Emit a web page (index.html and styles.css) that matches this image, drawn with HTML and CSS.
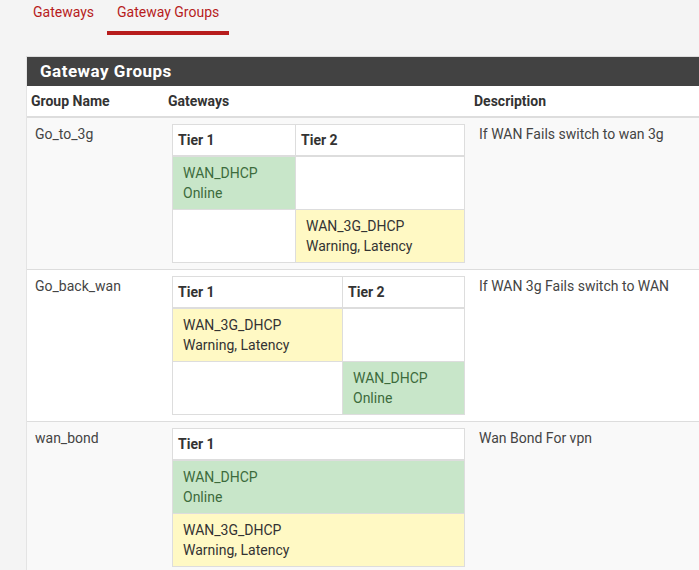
FILE: index.html
```html
<!DOCTYPE html>
<html>
<head>
<meta charset="utf-8">
<link rel="stylesheet" href="styles.css">
</head>
<body>
<nav class="tabs">
  <a class="tab" href="#">Gateways</a>
  <a class="tab active" href="#">Gateway Groups</a>
</nav>
<section class="panel">
  <h2 class="panel-title">Gateway Groups</h2>
  <table class="groups">
    <thead>
      <tr>
        <th class="c-name">Group Name</th>
        <th class="c-gw">Gateways</th>
        <th class="c-desc">Description</th>
      </tr>
    </thead>
    <tbody>
      <tr class="odd">
        <td>Go_to_3g</td>
        <td class="gw-cell">
          <table class="tiers">
            <thead><tr><th class="t-narrow">Tier 1</th><th>Tier 2</th></tr></thead>
            <tbody>
              <tr><td class="ok">WAN_DHCP<br>Online</td><td></td></tr>
              <tr><td></td><td class="warn">WAN_3G_DHCP<br>Warning, Latency</td></tr>
            </tbody>
          </table>
        </td>
        <td class="desc">If WAN Fails switch to wan 3g</td>
      </tr>
      <tr>
        <td>Go_back_wan</td>
        <td class="gw-cell">
          <table class="tiers">
            <thead><tr><th class="t-wide">Tier 1</th><th>Tier 2</th></tr></thead>
            <tbody>
              <tr><td class="warn">WAN_3G_DHCP<br>Warning, Latency</td><td></td></tr>
              <tr><td></td><td class="ok">WAN_DHCP<br>Online</td></tr>
            </tbody>
          </table>
        </td>
        <td class="desc">If WAN 3g Fails switch to WAN</td>
      </tr>
      <tr class="odd">
        <td>wan_bond</td>
        <td class="gw-cell">
          <table class="tiers">
            <thead><tr><th>Tier 1</th></tr></thead>
            <tbody>
              <tr><td class="ok">WAN_DHCP<br>Online</td></tr>
              <tr><td class="warn">WAN_3G_DHCP<br>Warning, Latency</td></tr>
            </tbody>
          </table>
        </td>
        <td class="desc">Wan Bond For vpn</td>
      </tr>
    </tbody>
  </table>
</section>
</body>
</html>
```

FILE: styles.css
```css
html, body {
  margin: 0;
  padding: 0;
  overflow: hidden;
}
body {
  background: #f4f4f4;
  font-family: Roboto, "Liberation Sans", Arial, sans-serif;
  font-size: 14px;
  color: #333;
  width: 699px;
  height: 570px;
}
.tabs {
  display: flex;
  gap: 3px;
  margin-left: 23px;
  height: 35px;
}
.tab {
  display: block;
  padding: 3px 10px 10px;
  line-height: 18px;
  font-size: 14px;
  color: #b71c1c;
  text-decoration: none;
  border-bottom: 4px solid transparent;
}
.tab.active {
  border-bottom-color: #b71c1c;
}
.panel {
  margin: 21px 0 0 26px;
  width: 760px;
  border: 1px solid #dcdcdc;
  border-left-color: #e4e4e4;
  background: #fff;
}
.panel-title {
  margin: 0;
  background: #424242;
  color: #fff;
  font-size: 17px;
  font-weight: bold;
  letter-spacing: 0.5px;
  line-height: 29px;
  padding: 0 13px;
}
.groups {
  border-collapse: collapse;
  table-layout: fixed;
  width: 100%;
}
.groups th {
  text-align: left;
  font-weight: bold;
  line-height: 20px;
  padding: 5px 5px 5px 4px;
  border-bottom: 2px solid #ddd;
  color: #333;
}
.c-name { width: 128px; }
.c-gw { width: 297px; }
.groups > tbody > tr > td {
  vertical-align: top;
  padding: 6px 9px 6px 8px;
  line-height: 20px;
  border-top: 1px solid #ddd;
  color: #444;
}
.groups > tbody > tr:first-child > td { border-top: 0; }
.groups > tbody > tr.odd > td { background: #f9f9f9; }
.groups > tbody > tr > td.gw-cell { padding: 6px 5px 6px 8px; }
.groups > tbody > tr > td.desc { padding-left: 9px; }
.tiers {
  width: 100%;
  border-collapse: collapse;
  border: 1px solid #ddd;
  background: #fff;
}
.tiers th {
  text-align: left;
  font-weight: bold;
  line-height: 20px;
  padding: 5px 5px;
  border: 1px solid #ddd;
  border-bottom: 2px solid #ddd;
  color: #333;
}
.tiers th.t-narrow { width: 112px; }
.tiers th.t-wide { width: 159px; }
.tiers td {
  line-height: 20px;
  padding: 6px 10px;
  border: 1px solid #ddd;
  height: 40px;
  vertical-align: top;
}
.tiers td.ok {
  background: #c8e6c9;
  color: #3c6b3c;
}
.tiers td.warn {
  background: #fff9c4;
  color: #333;
}
```
